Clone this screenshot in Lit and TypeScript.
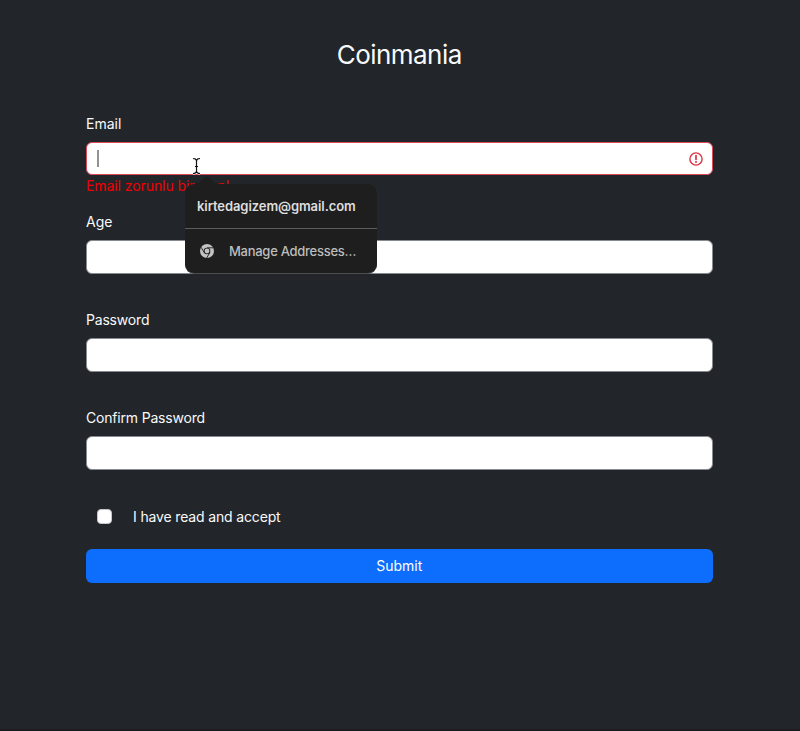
import { LitElement, html, css, nothing } from "lit";
import { customElement, property } from "lit/decorators.js";

@customElement("form-field")
class FormField extends LitElement {
  @property() label = "";
  @property() error = "";

  static styles = css`
    :host { display: block; height: 98px; }
    .label { display: block; height: 28px; line-height: 20px; letter-spacing: -0.19px; }
    .label.short { letter-spacing: 0; }
    .control {
      display: flex; align-items: center; justify-content: space-between;
      box-sizing: border-box; height: 34px; padding: 0 9px 0 10px;
      background: #fff; border: 1px solid #868b92; border-radius: 6px;
    }
    .control.invalid { height: 33px; border-color: #dc4a58; }
    .caret { width: 2px; height: 17px; background: #929292; }
    .error { height: 22px; line-height: 22px; color: #ee0000; white-space: nowrap; letter-spacing: -0.08px; }
    svg { display: block; }
  `;

  render() {
    return html`
      <label class="label ${this.label.length < 6 ? "short" : ""}"><span>${this.label}</span></label>
      <div class="control ${this.error ? "invalid" : ""}">
        ${this.error
          ? html`<span class="caret"></span>
              <svg width="14" height="14" viewBox="0 0 14 14" fill="none" stroke="#dc3545">
                <circle cx="7" cy="7" r="6.1" stroke-width="1.4" />
                <path d="M7 3.6v3.9" stroke-width="1.7" stroke-linecap="round" />
                <circle cx="7" cy="10" r="1" fill="#dc3545" stroke="none" />
              </svg>`
          : nothing}
      </div>
      ${this.error ? html`<div class="error"><span>${this.error}</span></div>` : nothing}
    `;
  }
}

@customElement("autofill-menu")
class AutofillMenu extends LitElement {
  static styles = css`
    :host { display: block; width: 192px; font-size: 13px; }
    .arrow { display: block; margin-left: 9px; }
    .panel { background: #1e1e1e; border-radius: 9px; height: 89px; box-shadow: 0 1px 0 #4b4e51; }
    .suggestion {
      box-sizing: border-box; height: 45px; padding: 0 12px; line-height: 45px; letter-spacing: -0.08px;
      color: #dedede; font-weight: 600; border-bottom: 1px solid #5d5d5d; white-space: nowrap;
    }
    .manage {
      display: flex; align-items: center; gap: 15px; height: 43px; padding-left: 15px;
      color: #bdbdbd; white-space: nowrap; letter-spacing: -0.27px; font-weight: 450;
    }
  `;

  render() {
    return html`
      <svg class="arrow" width="26" height="8" viewBox="0 0 26 8">
        <path d="M0 8C4 8 7 5 10 2Q13-1 16 2C19 5 22 8 26 8Z" fill="#1e1e1e" />
      </svg>
      <div class="panel">
        <div class="suggestion"><span>kirtedagizem@gmail.com</span></div>
        <div class="manage">
          <svg width="14" height="14" viewBox="0 0 14 14">
            <circle cx="7" cy="7" r="7" fill="#c2c2c2" />
            <g stroke="#1e1e1e" stroke-width=".9" fill="none">
              <path d="M7 3.8h6.2M4.2 8.6L1.1 3.2M9.8 8.6L6.7 14" />
            </g>
            <circle cx="7" cy="7" r="3.3" fill="#1e1e1e" />
            <circle cx="7" cy="7" r="2.4" fill="#c2c2c2" />
          </svg>
          <span>Manage Addresses…</span>
        </div>
      </div>
    `;
  }
}

@customElement("app-root")
class AppRoot extends LitElement {
  static styles = css`
    :host {
      display: block; position: relative; box-sizing: border-box; height: 731px;
      padding: 37px 87.5px 0 86px; background: #22262a; color: #f8f9fa; overflow: hidden;
      font: 14px/20px Inter, "Liberation Sans", sans-serif;
      border-bottom: 2px solid #1c1b20;
    }
    h1 {
      margin: 0 0 77px; height: 0; line-height: 36px; font-size: 26px; font-weight: 400;
      letter-spacing: -0.55px; text-align: center;
    }
    .accept {
      display: flex; align-items: center; gap: 21px; height: 20px; margin-top: 0.5px;
      padding-left: 11px; letter-spacing: -0.15px;
    }
    .box { box-sizing: border-box; width: 15px; height: 15px; background: #fff; border: 1px solid #c4c6c8; border-radius: 4px; }
    .submit {
      display: block; width: 100%; height: 33.5px; margin-top: 22.5px; padding: 0; border: 0;
      border-radius: 6px; background: #0d6efd; color: #fff; font: inherit;
    }
    autofill-menu { position: absolute; left: 185px; top: 176px; }
    .cursor { position: absolute; left: 191px; top: 157px; }
  `;

  render() {
    return html`
      <h1><span>Coinmania</span></h1>
      <form-field label="Email" error="Email zorunlu bir alan!"></form-field>
      <form-field label="Age"></form-field>
      <form-field label="Password"></form-field>
      <form-field label="Confirm Password"></form-field>
      <div class="accept"><span class="box"></span><span>I have read and accept</span></div>
      <button class="submit">Submit</button>
      <autofill-menu></autofill-menu>
      <svg class="cursor" width="11" height="18" viewBox="0 0 11 18" fill="none">
        <path d="M2 1.5Q5 1.5 5.5 3.5Q6 1.5 9 1.5M5.5 3.5V14.5M2 16.5Q5 16.5 5.5 14.5Q6 16.5 9 16.5" stroke="#fff" stroke-width="2.6" />
        <path d="M2 1.5Q5 1.5 5.5 3.5Q6 1.5 9 1.5M5.5 3.5V14.5M2 16.5Q5 16.5 5.5 14.5Q6 16.5 9 16.5M4 9.5h3" stroke="#111" stroke-width="1.2" />
      </svg>
    `;
  }
}
